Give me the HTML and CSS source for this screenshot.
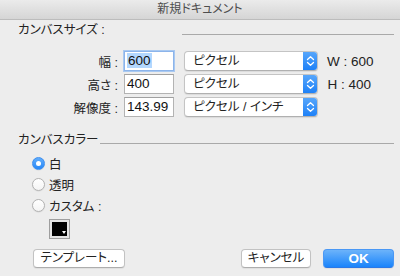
FILE: index.html
```html
<!DOCTYPE html>
<html lang="ja">
<head>
<meta charset="utf-8">
<title>新規ドキュメント</title>
<link rel="stylesheet" href="styles.css">
</head>
<body>
<div class="window">
  <div class="titlebar">新規ドキュメント</div>
  <div class="content">
    <div class="section-head head-size">
      <span class="section-label">カンバスサイズ :</span>
      <span class="rule"></span>
    </div>
    <div class="form">
      <div class="row">
        <span class="field-label">幅 :</span>
        <span class="input focused"><span class="sel">600</span></span>
        <span class="popup"><span class="popup-text">ピクセル</span><span class="stepper"><svg width="9" height="12" viewBox="0 0 9 12"><path d="M1.5 4.5 L4.5 1.8 L7.5 4.5 M1.5 7.5 L4.5 10.2 L7.5 7.5" fill="none" stroke="#fff" stroke-width="1.3" stroke-linecap="round" stroke-linejoin="round"/></svg></span></span>
        <span class="info">W : 600</span>
      </div>
      <div class="row">
        <span class="field-label">高さ :</span>
        <span class="input">400</span>
        <span class="popup"><span class="popup-text">ピクセル</span><span class="stepper"><svg width="9" height="12" viewBox="0 0 9 12"><path d="M1.5 4.5 L4.5 1.8 L7.5 4.5 M1.5 7.5 L4.5 10.2 L7.5 7.5" fill="none" stroke="#fff" stroke-width="1.3" stroke-linecap="round" stroke-linejoin="round"/></svg></span></span>
        <span class="info">H : 400</span>
      </div>
      <div class="row">
        <span class="field-label">解像度 :</span>
        <span class="input">143.99</span>
        <span class="popup"><span class="popup-text">ピクセル / インチ</span><span class="stepper"><svg width="9" height="12" viewBox="0 0 9 12"><path d="M1.5 4.5 L4.5 1.8 L7.5 4.5 M1.5 7.5 L4.5 10.2 L7.5 7.5" fill="none" stroke="#fff" stroke-width="1.3" stroke-linecap="round" stroke-linejoin="round"/></svg></span></span>
      </div>
    </div>
    <div class="section-head head-color">
      <span class="section-label">カンバスカラー</span>
      <span class="rule"></span>
    </div>
    <div class="radios">
      <div class="radio-item"><span class="radio checked"></span><span>白</span></div>
      <div class="radio-item"><span class="radio"></span><span>透明</span></div>
      <div class="radio-item"><span class="radio"></span><span>カスタム :</span></div>
      <div class="well"><span class="well-inner"><span class="well-arrow"></span></span></div>
    </div>
    <div class="buttons">
      <span class="btn btn-template">テンプレート...</span>
      <span class="spacer"></span>
      <span class="btn btn-cancel">キャンセル</span>
      <span class="btn btn-ok">OK</span>
    </div>
  </div>
</div>
</body>
</html>
```
FILE: styles.css
```css
* { box-sizing: border-box; }
html, body { margin: 0; padding: 0; }
body {
  width: 400px;
  height: 276px;
  overflow: hidden;
  background: #ededed;
  font-family: "Liberation Sans", "Noto Sans CJK JP", sans-serif;
  color: #222;
  font-feature-settings: "palt";
}
.window {
  width: 400px;
  height: 276px;
  display: flex;
  flex-direction: column;
  background: #ededed;
}
.titlebar {
  height: 20px;
  flex: none;
  border-bottom: 1px solid #bcbcbc;
  background: linear-gradient(#ebebeb, #d5d5d5);
  text-align: center;
  font-size: 12px;
  line-height: 19px;
  color: #4d4d4d;
}
.content {
  padding: 2px 6px 0 18px;
  display: flex;
  flex-direction: column;
}
.section-head {
  display: flex;
  align-items: flex-end;
  font-size: 12.5px;
  line-height: 16px;
  height: 16px;
}
.head-size .section-label { flex: 0 0 164px; }
.head-color { margin-top: 15px; }
.head-color .section-label { margin-right: 2px; }
.rule {
  flex: 1;
  border-top: 1px solid #a9a9a9;
  margin-bottom: 3px;
}
.head-color .rule { margin-bottom: 4px; }
.form {
  margin-top: 13px;
  display: flex;
  flex-direction: column;
  gap: 3px;
}
.row {
  display: flex;
  align-items: center;
  height: 20px;
  font-size: 12.5px;
}
.field-label {
  width: 100px;
  text-align: right;
  margin-right: 6px;
}
.input {
  width: 50px;
  height: 20px;
  margin-right: 10px;
  background: #fff;
  border: 1px solid #b3b3b3;
  border-top-color: #a0a0a0;
  font-size: 13.5px;
  line-height: 18px;
  padding-left: 2px;
  color: #111;
}
.input.focused {
  border-color: #8cb4ea;
  box-shadow: 0 0 0 1px #a9c9f1;
}
.sel {
  background: #b3d7fe;
  padding: 0 1px;
}
.popup {
  width: 134px;
  height: 20px;
  margin-right: 9px;
  display: flex;
  background: #fff;
  border-radius: 4px;
  border: 1px solid #c4c4c4;
  border-bottom-color: #b0b0b0;
  box-shadow: 0 1px 1px rgba(0,0,0,0.08);
  overflow: hidden;
}
.popup-text {
  flex: 1;
  padding-left: 8px;
  line-height: 18px;
  font-size: 12.5px;
}
.stepper {
  width: 15px;
  flex: none;
  margin: -1px -1px -1px 0;
  background: linear-gradient(#5aa8fb, #1b7ff7);
  display: flex;
  align-items: center;
  justify-content: center;
}
.info {
  width: 44px;
  text-align: right;
  font-size: 13.5px;
  white-space: nowrap;
}
.radios {
  margin-top: 5px;
  margin-left: 14px;
  display: flex;
  flex-direction: column;
}
.radio-item {
  display: flex;
  align-items: center;
  gap: 4px;
  height: 21px;
  font-size: 12.5px;
}
.radio {
  width: 13px;
  height: 13px;
  border-radius: 50%;
  background: linear-gradient(#fff, #f4f4f4);
  border: 1px solid #b2b2b2;
  box-shadow: 0 0.5px 1px rgba(0,0,0,0.1);
  display: flex;
  align-items: center;
  justify-content: center;
}
.radio.checked {
  border-color: #3d8ff0;
  background: linear-gradient(#62adfb, #2687f7);
}
.radio.checked::after {
  content: "";
  width: 5px;
  height: 5px;
  border-radius: 50%;
  background: #fff;
}
.well {
  margin-top: 3px;
  margin-left: 17px;
  width: 21px;
  height: 20px;
  border: 1px solid #9e9e9e;
  background: #e4e4e4;
  padding: 2px;
}
.well-inner {
  display: block;
  position: relative;
  width: 100%;
  height: 100%;
  background: #000;
}
.well-arrow {
  position: absolute;
  right: 1px;
  bottom: 2px;
  width: 0;
  height: 0;
  border-left: 2.5px solid transparent;
  border-right: 2.5px solid transparent;
  border-top: 3px solid #fff;
}
.buttons {
  margin-top: 10px;
  margin-left: 15px;
  display: flex;
  height: 19px;
}
.spacer { flex: 1; }
.btn {
  height: 19px;
  border-radius: 4px;
  background: #fff;
  border: 1px solid #c2c2c2;
  border-bottom-color: #adadad;
  box-shadow: 0 1px 1px rgba(0,0,0,0.06);
  font-size: 12.5px;
  line-height: 17px;
  text-align: center;
}
.btn-template { width: 92px; }
.btn-cancel { width: 70px; margin-right: 12px; }
.btn-ok {
  width: 71px;
  border-color: #4a98f5;
  border-bottom-color: #2b78e6;
  background: linear-gradient(#6cb3fa, #1a84fb);
  color: #fff;
  font-size: 13.5px;
  font-weight: bold;
}
```
